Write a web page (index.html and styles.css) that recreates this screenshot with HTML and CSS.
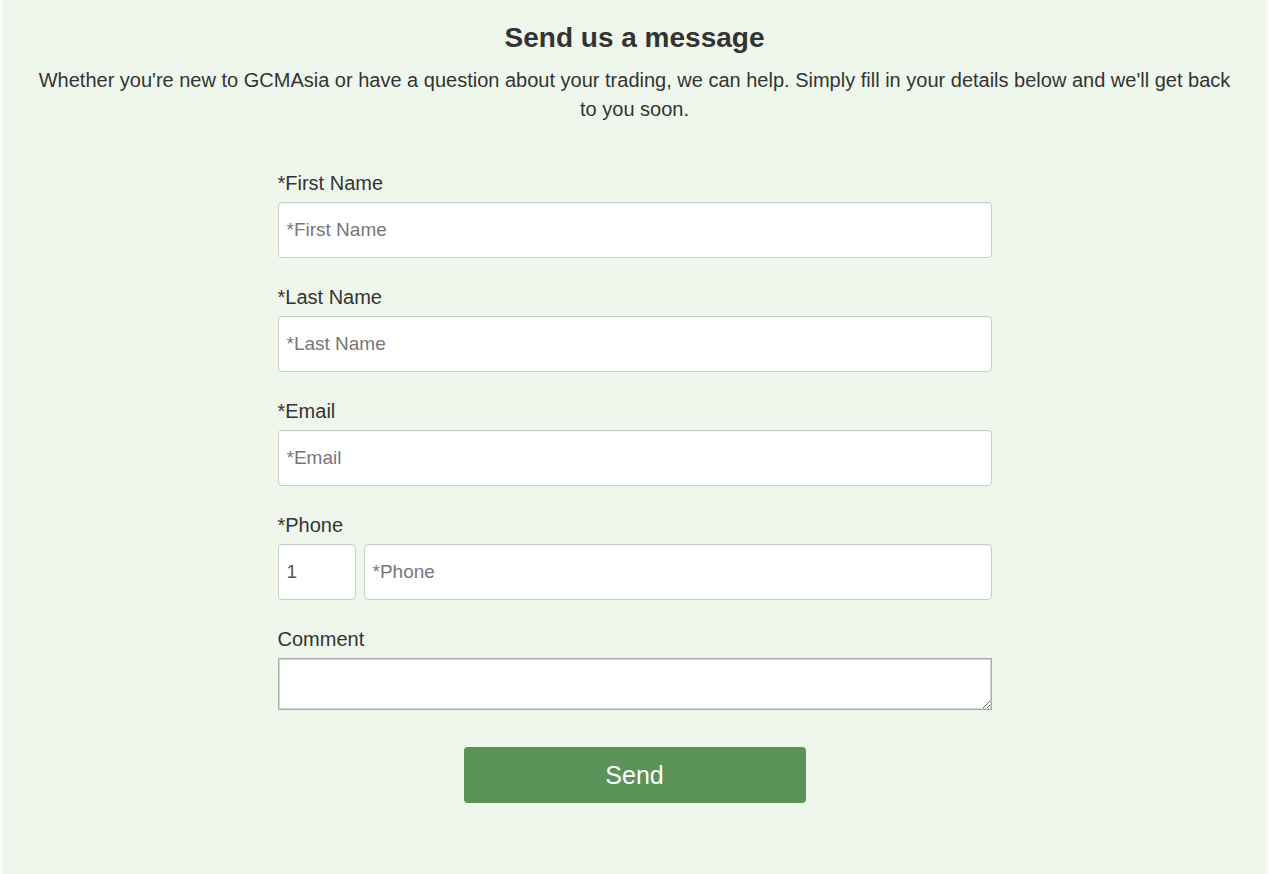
FILE: index.html
```html
<!DOCTYPE html>
<html lang="en">
<head>
<meta charset="utf-8">
<title>Send us a message</title>
<link rel="stylesheet" href="styles.css">
</head>
<body>
<main class="panel">
  <h1 class="title">Send us a message</h1>
  <p class="intro">Whether you're new to GCMAsia or have a question about your trading, we can help. Simply fill in your details below and we'll get back to you soon.</p>
  <form class="form">
    <div class="group">
      <label class="label" for="fn">*First Name</label>
      <input class="field" id="fn" type="text" placeholder="*First Name">
    </div>
    <div class="group">
      <label class="label" for="ln">*Last Name</label>
      <input class="field" id="ln" type="text" placeholder="*Last Name">
    </div>
    <div class="group">
      <label class="label" for="em">*Email</label>
      <input class="field" id="em" type="text" placeholder="*Email">
    </div>
    <div class="group">
      <label class="label" for="ph">*Phone</label>
      <div class="phone-row">
        <input class="field code" type="text" value="1">
        <input class="field grow" id="ph" type="text" placeholder="*Phone">
      </div>
    </div>
    <div class="group last">
      <label class="label" for="cm">Comment</label>
      <textarea class="comment" id="cm"></textarea>
    </div>
    <div class="actions">
      <button class="send" type="button">Send</button>
    </div>
  </form>
</main>
</body>
</html>
```
FILE: styles.css
```css
html, body {
  margin: 0;
  padding: 0;
  background: #fafcf9;
  font-family: "Liberation Sans", Arial, sans-serif;
  color: #333;
}
.panel {
  margin: 0 3px;
  min-height: 874px;
  box-sizing: border-box;
  background: #eff7ec;
  padding: 21px 30px 40px;
  text-align: center;
}
.title {
  margin: 0;
  font-size: 28px;
  line-height: 34px;
  font-weight: bold;
  color: #333;
}
.intro {
  margin: 11px 0 0;
  font-size: 20px;
  line-height: 29px;
}
.form {
  width: 714px;
  margin: 45px auto 0;
  text-align: left;
}
.group {
  display: flex;
  flex-direction: column;
  margin-bottom: 25px;
}
.group.last {
  margin-bottom: 37px;
}
.label {
  font-size: 20px;
  line-height: 28px;
  margin-bottom: 5px;
}
.field {
  box-sizing: border-box;
  height: 56px;
  width: 100%;
  border: 1px solid #c9ccc7;
  border-radius: 4px;
  background: #fff;
  padding: 0 8px;
  font-family: "Liberation Sans", Arial, sans-serif;
  font-size: 19px;
  color: #555;
  box-shadow: inset 0 1px 1px rgba(0,0,0,0.04);
  outline: none;
}
.field::placeholder {
  color: #777;
}
.phone-row {
  display: flex;
  gap: 8px;
}
.code {
  width: 78px;
  flex: none;
}
.grow {
  flex: 1;
}
.comment {
  box-sizing: border-box;
  display: block;
  width: 100%;
  height: 52px;
  border: 1px solid #a9ada7;
  box-shadow: inset 0 0 0 1px #d4d8d2;
  background: #fff;
  font-family: "Liberation Sans", Arial, sans-serif;
  font-size: 19px;
  margin: 0;
}
.actions {
  display: flex;
  justify-content: center;
}
.send {
  width: 342px;
  height: 56px;
  border: none;
  border-radius: 4px;
  background: #5c9358;
  color: #fff;
  font-family: "Liberation Sans", Arial, sans-serif;
  font-size: 25px;
  padding-top: 2px;
  cursor: pointer;
}
```
